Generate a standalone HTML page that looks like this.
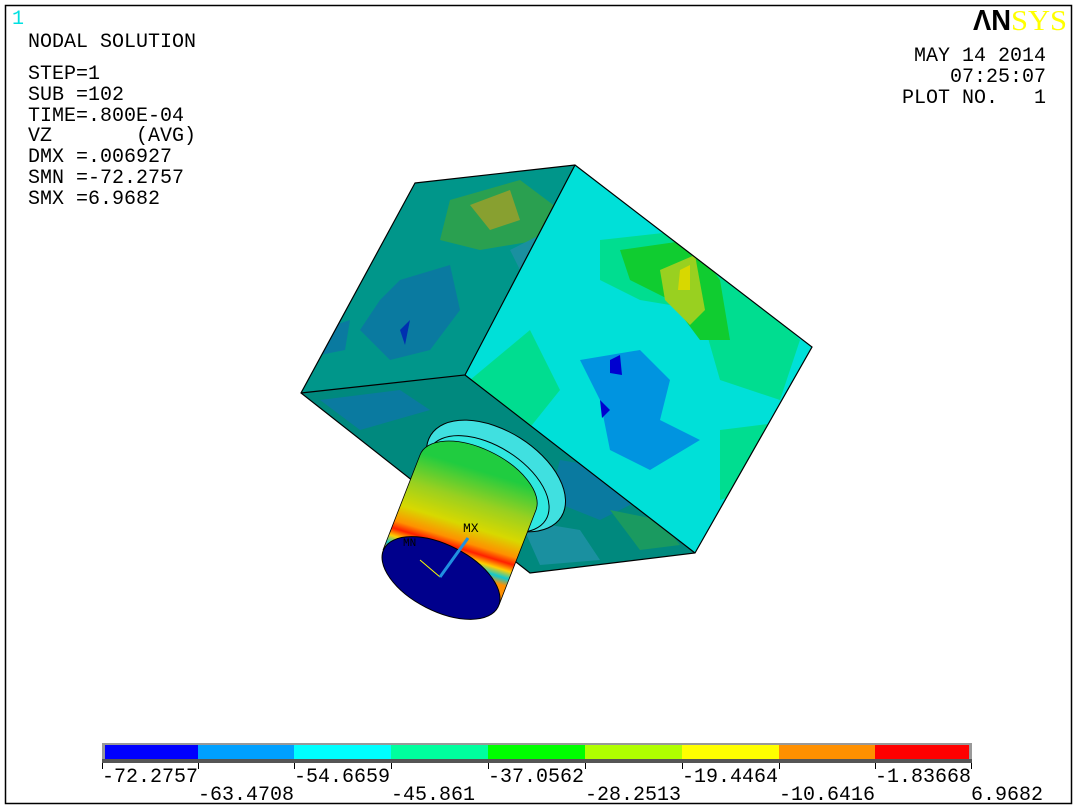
<!DOCTYPE html>
<html><head><meta charset="utf-8"><style>
html,body{margin:0;padding:0;background:#fff;width:1077px;height:810px;overflow:hidden}
svg{display:block}
text{font-family:"Liberation Mono",monospace;font-size:20px;fill:#000;white-space:pre}
</style></head><body>
<svg width="1077" height="810" viewBox="0 0 1077 810" xmlns="http://www.w3.org/2000/svg" xml:space="preserve">
<rect x="5.5" y="5.5" width="1066" height="798" fill="#fff" stroke="#000" stroke-width="1.5"/>
<text x="12" y="24" style="fill:#00e0e0">1</text>
<text x="28" y="47">NODAL SOLUTION</text>
<text x="28" y="79">STEP=1</text>
<text x="28" y="100">SUB =102</text>
<text x="28" y="121">TIME=.800E-04</text>
<text x="28" y="141">VZ       (AVG)</text>
<text x="28" y="162">DMX =.006927</text>
<text x="28" y="183">SMN =-72.2757</text>
<text x="28" y="204">SMX =6.9682</text>
<text x="973" y="30" textLength="38" lengthAdjust="spacingAndGlyphs" style="font-family:'Liberation Sans',sans-serif;font-weight:bold;font-size:29px;fill:#000">ΛN</text>
<text x="1011" y="30" textLength="56" lengthAdjust="spacingAndGlyphs" style="font-family:'Liberation Serif',serif;font-size:29px;fill:#ffff00">SYS</text>
<text x="1046" y="61" text-anchor="end">MAY 14 2014</text>
<text x="1046" y="82" text-anchor="end">07:25:07</text>
<text x="1046" y="103" text-anchor="end">PLOT NO.   1</text>
<defs>
<clipPath id="lf"><polygon points="415,183 575,165 465,375 301,393"/></clipPath>
<clipPath id="rf"><polygon points="575,165 812,347 695,553 465,375"/></clipPath>
<clipPath id="bf"><polygon points="301,393 465,375 695,553 530,573"/></clipPath>
<clipPath id="cyl"><path d="M383,550 L420,455 A64,33 27 0 1 536,510 L499,605 A64,33 27 0 1 383,550 Z"/></clipPath>
<linearGradient id="cg" x1="478" y1="470" x2="441" y2="590" gradientUnits="userSpaceOnUse">
<stop offset="0" stop-color="#20cc40"/><stop offset="0.25" stop-color="#99d020"/>
<stop offset="0.45" stop-color="#d8d800"/><stop offset="0.58" stop-color="#ff9000"/>
<stop offset="0.64" stop-color="#ff2000"/><stop offset="0.7" stop-color="#ffd000"/>
<stop offset="0.76" stop-color="#10c8d0"/><stop offset="0.82" stop-color="#ff9000"/>
<stop offset="1" stop-color="#ff9000"/>
</linearGradient>
</defs>
<g clip-path="url(#lf)">
<rect x="290" y="160" width="300" height="240" fill="#00968a"/>
<path d="M450,200 L520,180 L560,210 L540,240 L480,250 L440,240Z" fill="#2aa050"/>
<path d="M470,205 L510,190 L520,220 L490,230Z" fill="#88a030"/>
<path d="M400,280 L450,265 L460,310 L430,350 L390,360 L360,330 L380,300Z" fill="#0a7aa0"/>
<path d="M400,330 L410,320 L405,345Z" fill="#0030b0"/>
<path d="M320,330 L350,320 L345,350 L320,355Z" fill="#0a7aa0"/>
<path d="M510,250 L550,230 L560,260 L530,290Z" fill="#1a90a0"/>
</g>
<g clip-path="url(#rf)">
<rect x="460" y="160" width="360" height="400" fill="#00e0d8"/>
<path d="M600,240 L690,230 L760,300 L800,340 L780,400 L720,380 L700,310 L640,300 L600,280Z" fill="#00dd90"/>
<path d="M620,250 L690,240 L720,280 L730,340 L700,340 L670,300 L630,280Z" fill="#10cc30"/>
<path d="M660,270 L695,255 L705,310 L690,325 L665,300Z" fill="#99d020"/>
<path d="M680,270 L690,265 L690,290 L678,290Z" fill="#d8d800"/>
<path d="M470,380 L530,330 L560,390 L520,440Z" fill="#00dd90"/>
<path d="M580,360 L640,350 L670,380 L660,420 L700,440 L650,470 L610,450 L600,400Z" fill="#0094e0"/>
<path d="M610,360 L620,355 L622,375 L610,373Z" fill="#0000d0"/>
<path d="M600,400 L610,410 L602,418Z" fill="#0000d0"/>
<path d="M720,430 L800,420 L780,480 L720,500Z" fill="#00dd90"/>
</g>
<g clip-path="url(#bf)">
<rect x="295" y="370" width="410" height="210" fill="#00897e"/>
<path d="M320,400 L400,390 L430,410 L360,430Z" fill="#0a7aa0"/>
<path d="M560,460 L620,470 L640,500 L600,520 L550,500Z" fill="#0a7aa0"/>
<path d="M520,520 L580,530 L600,560 L540,565Z" fill="#1a90a0"/>
<path d="M610,510 L660,520 L680,545 L640,550Z" fill="#1a9a60"/>
</g>
<g fill="none" stroke="#000" stroke-width="1.2">
<polygon points="415,183 575,165 812,347 695,553 530,573 301,393"/>
<polyline points="301,393 465,375 575,165"/>
<line x1="465" y1="375" x2="695" y2="553"/>
</g>
<ellipse cx="496" cy="476" rx="77" ry="45" transform="rotate(32 496 476)" fill="#40e0e0" stroke="#000"/>
<ellipse cx="488" cy="484" rx="68" ry="38" transform="rotate(32 488 484)" fill="#30e8e0" stroke="#000"/>
<g clip-path="url(#cyl)">
<rect x="370" y="430" width="200" height="190" fill="url(#cg)"/>
</g>
<path d="M383,550 L420,455 A64,33 27 0 1 536,510 L499,605" fill="none" stroke="#000" stroke-width="0.8"/>
<ellipse cx="441" cy="578" rx="64" ry="33" transform="rotate(27 441 578)" fill="#00008c" stroke="#000"/>
<line x1="420" y1="560" x2="440" y2="577" stroke="#ffff00"/>
<line x1="440" y1="577" x2="468" y2="538" stroke="#2090e0" stroke-width="3"/>
<text x="463" y="532" style="font-size:13px">MX</text>
<text x="403" y="546" style="font-size:11px">MN</text>
<rect x="102" y="743" width="870" height="20" fill="#999"/>
<rect x="102" y="759" width="870" height="4" fill="#555"/>
<g>
<rect x="105" y="745" width="93" height="14" fill="#0000ff"/>
<rect x="198" y="745" width="96" height="14" fill="#00a0ff"/>
<rect x="294" y="745" width="97" height="14" fill="#00ffff"/>
<rect x="391" y="745" width="97" height="14" fill="#00ff9e"/>
<rect x="488" y="745" width="97" height="14" fill="#00ff00"/>
<rect x="585" y="745" width="97" height="14" fill="#b0ff00"/>
<rect x="682" y="745" width="97" height="14" fill="#ffff00"/>
<rect x="779" y="745" width="96" height="14" fill="#ff9000"/>
<rect x="875" y="745" width="94" height="14" fill="#ff0000"/>
</g>
<g stroke="#000" stroke-width="1">
<line x1="102.5" y1="763" x2="102.5" y2="769"/><line x1="198.5" y1="763" x2="198.5" y2="769"/><line x1="294.5" y1="763" x2="294.5" y2="769"/><line x1="391.5" y1="763" x2="391.5" y2="769"/><line x1="488.5" y1="763" x2="488.5" y2="769"/><line x1="585.5" y1="763" x2="585.5" y2="769"/><line x1="682.5" y1="763" x2="682.5" y2="769"/><line x1="779.5" y1="763" x2="779.5" y2="769"/><line x1="875.5" y1="763" x2="875.5" y2="769"/><line x1="971.5" y1="763" x2="971.5" y2="769"/>
</g>
<g style="font-size:20px">
<text x="102" y="782">-72.2757</text>
<text x="294" y="782">-54.6659</text>
<text x="488" y="782">-37.0562</text>
<text x="682" y="782">-19.4464</text>
<text x="875" y="782">-1.83668</text>
<text x="198" y="800">-63.4708</text>
<text x="391" y="800">-45.861</text>
<text x="585" y="800">-28.2513</text>
<text x="779" y="800">-10.6416</text>
<text x="971" y="800">6.9682</text>
</g>
</svg>
</body></html>
